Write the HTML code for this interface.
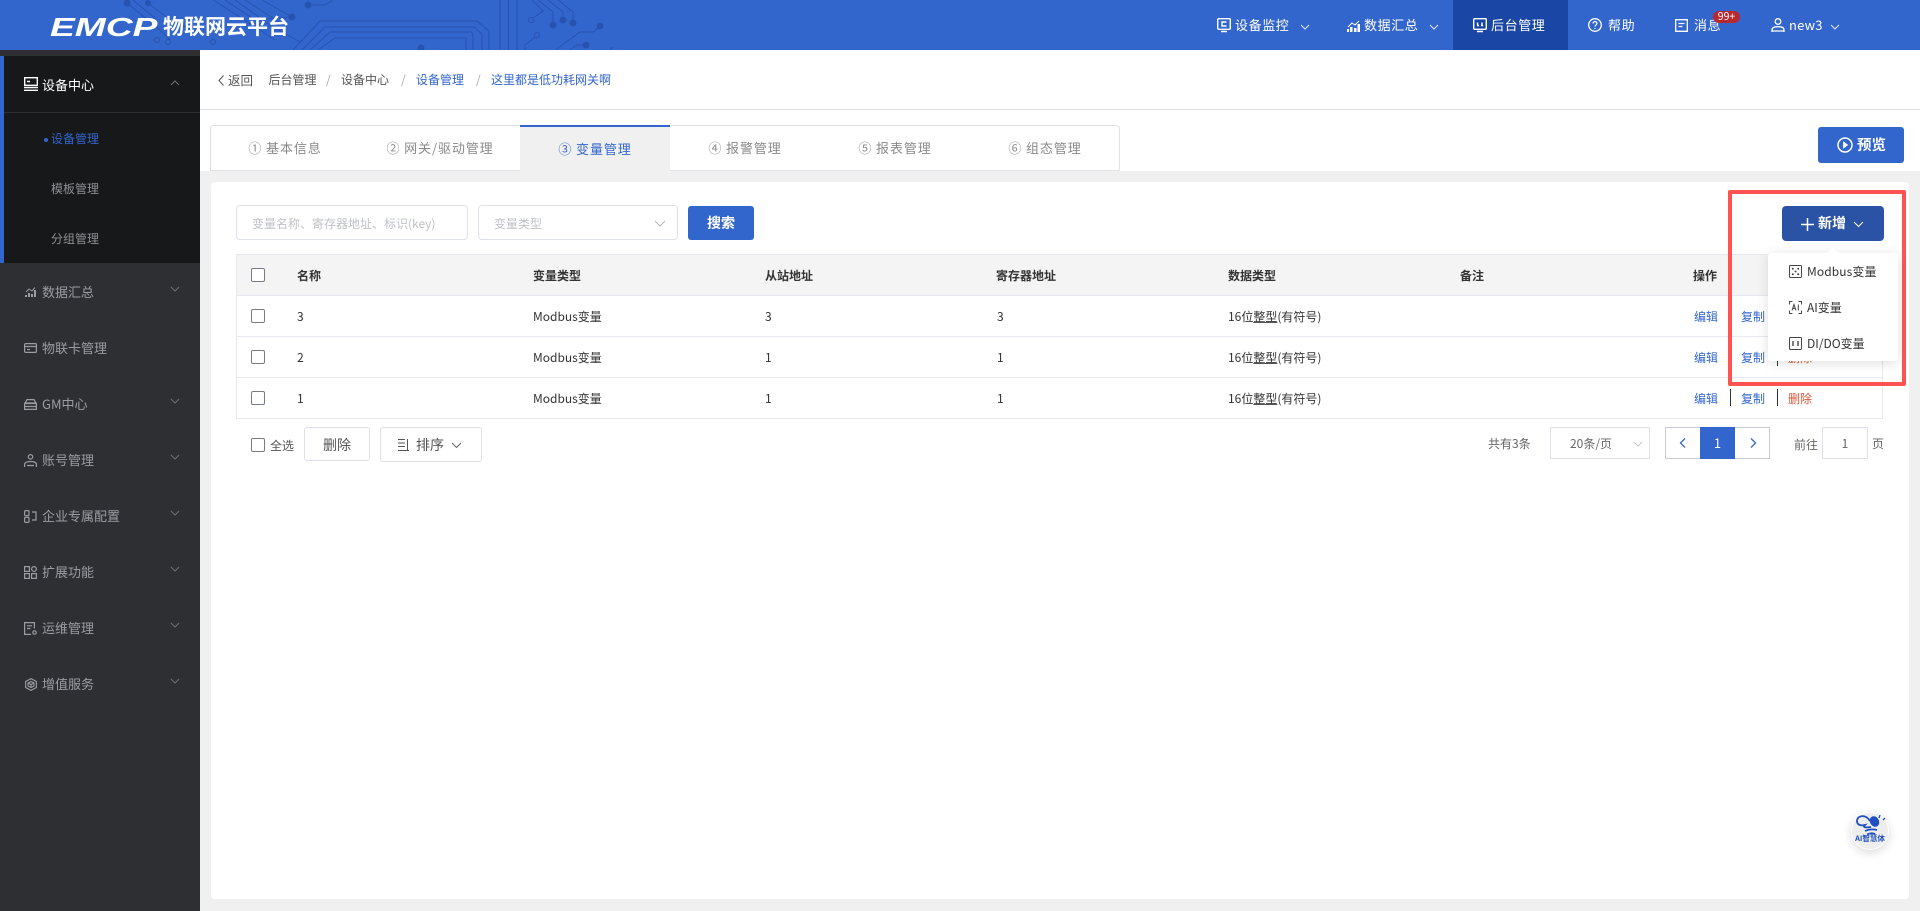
<!DOCTYPE html>
<html lang="zh-CN">
<head>
<meta charset="utf-8">
<title>EMCP 物联网云平台</title>
<style>
*{box-sizing:border-box;margin:0;padding:0}
html,body{width:1920px;height:911px;overflow:hidden;background:#f0f0f0}
body{position:relative;font-family:"Noto Sans CJK SC","Liberation Sans",sans-serif;font-size:12px;color:#333}
.a{position:absolute}
.t{position:absolute;white-space:nowrap;line-height:20px;height:20px}
svg{position:absolute;overflow:visible;fill:none}
.hd{color:#fff;font-size:13px;letter-spacing:.6px}
.sd{color:#9a9da3;font-size:13px}
.th{font-weight:700;color:#333}
.lnk{color:#3366cc}
.cb{position:absolute;width:14px;height:14px;border:1px solid #777b85;border-radius:2px;background:#fff}
.sep{position:absolute;width:1px;height:17px;background:#333}
.ln{position:absolute;left:237px;width:1646px;height:1px;background:#e8e9f0}
.tab{position:absolute;top:138px;width:150px;text-align:center;white-space:nowrap;line-height:20px;font-size:13px;letter-spacing:.9px;color:#8a8a8a}
u{text-decoration-thickness:1px;text-decoration-color:#555}
</style>
</head>
<body>

<!-- header -->
<div class="a" style="left:0;top:0;width:1920px;height:50px;background:#3366cc"></div>
<svg style="left:0;top:0" width="800" height="50" viewBox="0 0 800 50" stroke="#2753b0" stroke-width="1">
<path d="M293 50L320 21H477L489 31V50M302 50L325 27H474L482 34V50M310 50L330 32H472L473 38V50M318 50L335 38H466V50"/>
<path d="M500 0V50M508.5 0V50M517 0V50"/>
<path d="M532 0L543 11L533 18M538 0L553 12V25M548 0L563 12V20M558 0L573 12V23M525 50V45L535 37M555 50L580 32H593L600 26M570 50L577 45H586M610 50L613 47"/>
<path d="M127 3L158 28L170 40M148 3L170 20L192 30M133 0L156 19M213 0L240 17L275 40M225 0L255 20L292 17M235 0L270 25L300 42M245 0L282 24M262 0L292 17M308 5H325L333 0"/>
<g fill="#2753b0"><circle cx="553" cy="25" r="3"/><circle cx="563" cy="20" r="3"/><circle cx="573" cy="23" r="3"/><circle cx="600" cy="26" r="3"/><circle cx="586" cy="45" r="3"/><circle cx="421" cy="48" r="3"/><circle cx="127" cy="3" r="3"/><circle cx="148" cy="3" r="2.5"/><circle cx="308" cy="5" r="3"/><circle cx="292" cy="17" r="3"/></g>
<circle cx="531" cy="20" r="2.5"/><circle cx="537" cy="35" r="2.5"/><circle cx="157" cy="40" r="2.5"/><circle cx="168" cy="42" r="2.5"/><circle cx="213" cy="42" r="2.5"/>
</svg>
<div class="a" style="left:50px;top:13px;width:108px;height:28px;color:#fff;font:italic 700 26px/28px 'Liberation Sans',sans-serif;transform-origin:0 50%;transform:scaleX(1.43);white-space:nowrap">EMCP</div>
<div class="t" style="left:163px;top:14px;height:24px;line-height:24px;color:#fff;font-size:21px;font-weight:700">物联网云平台</div>

<div class="a" style="left:1453px;top:0;width:115px;height:50px;background:#1a47a5"></div>

<svg style="left:1217px;top:18px" width="14" height="15" viewBox="0 0 14 15" stroke="#fff" stroke-width="1.4"><rect x=".7" y=".7" width="12.6" height="10.6" rx="1"/><path d="M4 13.5H10M9.5 4H5V8H9.5" /></svg>
<div class="t hd" style="left:1235px;top:15px">设备监控</div>
<svg style="left:1300px;top:24px" width="10" height="6" stroke="#dfe6f7"><path d="M1 1L5 5L9 1"/></svg>
<svg style="left:1347px;top:20px" width="14" height="12" viewBox="0 0 14 12" fill="#fff"><path d="M0 12V9H2V12ZM3 12V7H5.500V12ZM7 12V8H9.500V12ZM10.500 12V4H13V12Z" fill="#fff"/><path d="M1 7L5 3L8 5L12 1" stroke="#fff"/></svg>
<div class="t hd" style="left:1364px;top:15px">数据汇总</div>
<svg style="left:1429px;top:24px" width="10" height="6" stroke="#dfe6f7"><path d="M1 1L5 5L9 1"/></svg>
<svg style="left:1473px;top:18px" width="14" height="15" viewBox="0 0 14 15" stroke="#fff" stroke-width="1.4"><rect x=".7" y=".7" width="12.6" height="10.6" rx="1"/><path d="M4 13.5H10M4 7.500H6M8 7.500H10M4.500 4.500V7M9 4.500V7"/></svg>
<div class="t hd" style="left:1491px;top:15px">后台管理</div>
<svg style="left:1588px;top:18px" width="14" height="14" viewBox="0 0 14 14" stroke="#fff" stroke-width="1.3"><circle cx="7" cy="7" r="6.300"/><path d="M5 5.500C5 3 9 3 9 5.500C9 7 7 7 7 8.500M7 10V11"/></svg>
<div class="t hd" style="left:1608px;top:15px">帮助</div>
<svg style="left:1675px;top:19px" width="13" height="13" viewBox="0 0 13 13" stroke="#fff" stroke-width="1.3"><path d="M.7.7H12.300V12.300H.7ZM3.500 4.500H9.500M3.500 7.500H7.500"/></svg>
<div class="t hd" style="left:1694px;top:15px">消息</div>
<div class="a" style="left:1713px;top:11px;width:27px;height:12px;border-radius:6px;background:#b8282e;color:#fff;font-size:10.500px;line-height:12px;text-align:center">99+</div>
<svg style="left:1771px;top:18px" width="14" height="15" viewBox="0 0 14 15" stroke="#fff" stroke-width="1.3"><circle cx="7" cy="3.500" r="2.800"/><path d="M1 14V12C1 9.500 3 8.700 7 8.700C11 8.700 13 9.500 13 12V14M1 13H13"/></svg>
<div class="t hd" style="left:1789px;top:15px;letter-spacing:.2px">new3</div>
<svg style="left:1830px;top:24px" width="10" height="6" stroke="#dfe6f7"><path d="M1 1L5 5L9 1"/></svg>

<!-- sidebar -->
<div class="a" style="left:0;top:50px;width:200px;height:861px;background:#2d2f33"></div>
<div class="a" style="left:0;top:56px;width:200px;height:207px;background:#17181a"></div>
<div class="a" style="left:0;top:56px;width:4px;height:207px;background:#3366cc"></div>
<div class="a" style="left:4px;top:112px;width:196px;height:1px;background:#2d2f33"></div>
<svg style="left:24px;top:77px" width="14" height="14" viewBox="0 0 14 14" stroke="#fff" stroke-width="1.4"><rect x=".7" y=".7" width="12.600" height="7.600"/><path d="M0 10.500H14M0 13.300H14M3 4.500H6"/></svg>
<div class="t" style="left:42px;top:75px;color:#fff;font-size:13px">设备中心</div>
<svg style="left:170px;top:80px" width="10" height="6" stroke="#6e7075"><path d="M1 5L5 1L9 5"/></svg>
<div class="a" style="left:44px;top:138px;width:4px;height:4px;border-radius:50%;background:#3366cc"></div>
<div class="t" style="left:51px;top:129px;color:#3366cc">设备管理</div>
<div class="t" style="left:51px;top:179px;color:#8f9196">模板管理</div>
<div class="t" style="left:51px;top:229px;color:#8f9196">分组管理</div>

<div class="t sd" style="left:42px;top:282px">数据汇总</div>
<div class="t sd" style="left:42px;top:338px">物联卡管理</div>
<div class="t sd" style="left:42px;top:394px">GM中心</div>
<div class="t sd" style="left:42px;top:450px">账号管理</div>
<div class="t sd" style="left:42px;top:506px">企业专属配置</div>
<div class="t sd" style="left:42px;top:562px">扩展功能</div>
<div class="t sd" style="left:42px;top:618px">运维管理</div>
<div class="t sd" style="left:42px;top:674px">增值服务</div>
<svg style="left:170px;top:286px" width="10" height="6" stroke="#6e7075"><path d="M1 1L5 5L9 1"/></svg>
<svg style="left:170px;top:398px" width="10" height="6" stroke="#6e7075"><path d="M1 1L5 5L9 1"/></svg>
<svg style="left:170px;top:454px" width="10" height="6" stroke="#6e7075"><path d="M1 1L5 5L9 1"/></svg>
<svg style="left:170px;top:510px" width="10" height="6" stroke="#6e7075"><path d="M1 1L5 5L9 1"/></svg>
<svg style="left:170px;top:566px" width="10" height="6" stroke="#6e7075"><path d="M1 1L5 5L9 1"/></svg>
<svg style="left:170px;top:622px" width="10" height="6" stroke="#6e7075"><path d="M1 1L5 5L9 1"/></svg>
<svg style="left:170px;top:678px" width="10" height="6" stroke="#6e7075"><path d="M1 1L5 5L9 1"/></svg>
<svg style="left:25px;top:287px" width="12" height="10" viewBox="0 0 12 10"><path d="M0 10V8H2V10ZM3 10V6H5V10ZM6 10V7H8V10ZM9 10V3H11V10Z" fill="#9a9da3"/><path d="M1 5L4 2L7 4L10 .5" stroke="#9a9da3"/></svg>
<svg style="left:24px;top:343px" width="13" height="10" viewBox="0 0 13 10" stroke="#9a9da3" stroke-width="1.200"><rect x=".6" y=".6" width="11.800" height="8.800" rx="1"/><path d="M1 3.500H12M3 6.500H6"/></svg>
<svg style="left:24px;top:399px" width="13" height="11" viewBox="0 0 13 11" stroke="#9a9da3" stroke-width="1.200"><path d="M3 .6H10L12 4H1ZM.6 4.500H12.400V10.400H.6ZM1 7.500H12"/></svg>
<svg style="left:24px;top:454px" width="13" height="13" viewBox="0 0 13 13" stroke="#9a9da3" stroke-width="1.200"><circle cx="6.500" cy="2.800" r="2.200"/><path d="M.6 13V10.500C.6 8.500 3 7.500 6.500 7.500C10 7.500 12.400 8.500 12.400 10.500V13M3 11.500H10"/></svg>
<svg style="left:24px;top:510px" width="13" height="13" viewBox="0 0 13 13" stroke="#9a9da3" stroke-width="1.200"><rect x=".6" y=".6" width="4.400" height="5" rx="1"/><rect x=".6" y="7.400" width="4.400" height="5" rx="1"/><path d="M8 2H12V10H8"/></svg>
<svg style="left:24px;top:566px" width="13" height="13" viewBox="0 0 13 13" stroke="#9a9da3" stroke-width="1.200"><rect x=".6" y=".6" width="4.800" height="4.800"/><circle cx="10" cy="3" r="2.400"/><rect x=".6" y="7.600" width="4.800" height="4.800"/><rect x="7.600" y="7.600" width="4.800" height="4.800"/></svg>
<svg style="left:24px;top:622px" width="13" height="13" viewBox="0 0 13 13" stroke="#9a9da3" stroke-width="1.200"><path d="M7 12.400H.6V.6H10.400V6.500M3 3.800H8M3 6.500H6.500"/><circle cx="10.500" cy="10.500" r="1.700"/></svg>
<svg style="left:25px;top:678px" width="12" height="13" viewBox="0 0 12 13" stroke="#9a9da3" stroke-width="1.100"><path d="M6 .6L11.400 3.500V9.500L6 12.400L.6 9.500V3.500ZM3 5L6 3.500L9 5V8L6 9.500L3 8ZM3 5L6 6.500L9 5M6 6.500V9.500"/></svg>

<!-- breadcrumb -->
<div class="a" style="left:200px;top:50px;width:1720px;height:121px;background:#fff"></div>
<div class="a" style="left:200px;top:109px;width:1720px;height:1px;background:#e2e2e2"></div>
<svg style="left:218px;top:75px" width="6" height="11" stroke="#555"><path d="M5.500 .5L1 5.500L5.500 10.500"/></svg>
<div class="t" style="left:228px;top:70px;color:#555;font-size:12.500px">返回</div>
<div class="t" style="left:268.500px;top:70px;color:#555">后台管理</div>
<div class="t" style="left:326px;top:70px;color:#aaa">/</div>
<div class="t" style="left:341px;top:70px;color:#555">设备中心</div>
<div class="t" style="left:401px;top:70px;color:#aaa">/</div>
<div class="t lnk" style="left:416px;top:70px">设备管理</div>
<div class="t" style="left:476px;top:70px;color:#aaa">/</div>
<div class="t lnk" style="left:491px;top:70px">这里都是低功耗网关啊</div>

<!-- tabs -->
<div class="a" style="left:210px;top:125px;width:310px;height:46px;border:1px solid #e1e1e8;border-right:0;border-radius:4px 0 0 0;background:#fff"></div>
<div class="a" style="left:520px;top:125px;width:150px;height:46px;border-top:2px solid #3366cc;background:#f0f0f0"></div>
<div class="a" style="left:670px;top:125px;width:450px;height:46px;border:1px solid #e1e1e8;border-left:0;border-radius:0 4px 0 0;background:#fff"></div>
<div class="tab" style="left:210px">① 基本信息</div>
<div class="tab" style="left:365px">② 网关/驱动管理</div>
<div class="tab" style="left:520px;top:139px;color:#3366cc">③ 变量管理</div>
<div class="tab" style="left:670px">④ 报警管理</div>
<div class="tab" style="left:820px">⑤ 报表管理</div>
<div class="tab" style="left:970px">⑥ 组态管理</div>

<div class="a" style="left:1818px;top:127px;width:86px;height:36px;background:#3366cc;border-radius:3px"></div>
<svg style="left:1837px;top:137px" width="16" height="16" viewBox="0 0 16 16" stroke="#fff" stroke-width="1.500"><circle cx="8" cy="8" r="7"/><path d="M6.500 5L10.500 8L6.500 11Z" fill="#fff" stroke-width=".8"/></svg>
<div class="t" style="left:1857px;top:135px;color:#fff;font-size:14.500px;font-weight:700">预览</div>

<!-- card -->
<div class="a" style="left:211px;top:182px;width:1698px;height:717px;background:#fff;border-radius:4px"></div>

<div class="a" style="left:236px;top:205px;width:232px;height:35px;border:1px solid #dfe1e8;border-radius:4px"></div>
<div class="t" style="left:252px;top:214px;color:#c0c2c8">变量名称、寄存器地址、标识(key)</div>
<div class="a" style="left:478px;top:205px;width:200px;height:35px;border:1px solid #dfe1e8;border-radius:4px"></div>
<div class="t" style="left:494px;top:214px;color:#c0c2c8">变量类型</div>
<svg style="left:654px;top:220px" width="12" height="7" stroke="#b5b7bd"><path d="M1 1L6 6L11 1"/></svg>
<div class="a" style="left:688px;top:206px;width:66px;height:34px;background:#3366cc;border-radius:3px;color:#fff;text-align:center;line-height:34px;font-size:14px;font-weight:700">搜索</div>

<!-- table -->
<div class="a" style="left:236px;top:254px;width:1647px;height:165px;border:1px solid #e8e9f0"></div>
<div class="a" style="left:237px;top:255px;width:1645px;height:40px;background:#f4f4f4"></div>
<div class="ln" style="top:295px"></div>
<div class="ln" style="top:336px"></div>
<div class="ln" style="top:377px"></div>
<div class="ln" style="top:418px"></div>

<div class="cb" style="left:251px;top:268px"></div>
<div class="t th" style="left:297px;top:266px">名称</div>
<div class="t th" style="left:533px;top:266px">变量类型</div>
<div class="t th" style="left:765px;top:266px">从站地址</div>
<div class="t th" style="left:996px;top:266px">寄存器地址</div>
<div class="t th" style="left:1228px;top:266px">数据类型</div>
<div class="t th" style="left:1460px;top:266px">备注</div>
<div class="t th" style="left:1693px;top:266px">操作</div>

<div class="cb" style="left:251px;top:309px"></div>
<div class="t" style="left:297px;top:307px">3</div>
<div class="t" style="left:533px;top:307px">Modbus变量</div>
<div class="t" style="left:765px;top:307px">3</div>
<div class="t" style="left:997px;top:307px">3</div>
<div class="t" style="left:1228px;top:307px">16位<u>整型</u>(有符号)</div>
<div class="t lnk" style="left:1694px;top:307px">编辑</div>
<div class="sep" style="left:1730px;top:308px"></div>
<div class="t lnk" style="left:1741px;top:307px">复制</div>
<div class="sep" style="left:1777px;top:308px"></div>
<div class="t" style="left:1788px;top:307px;color:#d9593a">删除</div>

<div class="cb" style="left:251px;top:350px"></div>
<div class="t" style="left:297px;top:348px">2</div>
<div class="t" style="left:533px;top:348px">Modbus变量</div>
<div class="t" style="left:765px;top:348px">1</div>
<div class="t" style="left:997px;top:348px">1</div>
<div class="t" style="left:1228px;top:348px">16位<u>整型</u>(有符号)</div>
<div class="t lnk" style="left:1694px;top:348px">编辑</div>
<div class="sep" style="left:1730px;top:349px"></div>
<div class="t lnk" style="left:1741px;top:348px">复制</div>
<div class="sep" style="left:1777px;top:349px"></div>
<div class="t" style="left:1788px;top:348px;color:#d9593a">删除</div>

<div class="cb" style="left:251px;top:391px"></div>
<div class="t" style="left:297px;top:389px">1</div>
<div class="t" style="left:533px;top:389px">Modbus变量</div>
<div class="t" style="left:765px;top:389px">1</div>
<div class="t" style="left:997px;top:389px">1</div>
<div class="t" style="left:1228px;top:389px">16位<u>整型</u>(有符号)</div>
<div class="t lnk" style="left:1694px;top:389px">编辑</div>
<div class="sep" style="left:1730px;top:389px"></div>
<div class="t lnk" style="left:1741px;top:389px">复制</div>
<div class="sep" style="left:1777px;top:389px"></div>
<div class="t" style="left:1788px;top:389px;color:#d9593a">删除</div>

<!-- table footer -->
<div class="cb" style="left:251px;top:438px"></div>
<div class="t" style="left:270px;top:436px;color:#555">全选</div>
<div class="a" style="left:304px;top:427px;width:66px;height:34px;border:1px solid #dfe1e8;border-radius:3px;text-align:center;line-height:34px;font-size:14px;color:#555">删除</div>
<div class="a" style="left:380px;top:427px;width:102px;height:35px;border:1px solid #dfe1e8;border-radius:3px"></div>
<svg style="left:398px;top:438px" width="12" height="14" viewBox="0 0 12 14" stroke="#555"><path d="M0 1.500H7M0 5H7M0 8.500H7M0 12.500H11M9.500 1V12"/></svg>
<div class="t" style="left:416px;top:435px;color:#555;font-size:14px">排序</div>
<svg style="left:451px;top:442px" width="11" height="7" stroke="#666"><path d="M1 1L5.500 5.500L10 1"/></svg>

<div class="t" style="left:1488px;top:434px;color:#666">共有3条</div>
<div class="a" style="left:1550px;top:427px;width:100px;height:32px;border:1px solid #dfe1e8"></div>
<div class="t" style="left:1570px;top:434px;color:#666">20条/页</div>
<svg style="left:1633px;top:441px" width="10" height="6" stroke="#c4c6cc"><path d="M1 1L5 5L9 1"/></svg>
<div class="a" style="left:1665px;top:427px;width:105px;height:32px;border:1px solid #c9cbd0"></div>
<div class="a" style="left:1700px;top:427px;width:35px;height:32px;background:#3366cc;color:#fff;text-align:center;line-height:32px;font-size:13px">1</div>
<svg style="left:1679px;top:438px" width="7" height="10" stroke="#3366cc" stroke-width="1.300"><path d="M6 .5L1.500 5L6 9.500"/></svg>
<svg style="left:1750px;top:438px" width="7" height="10" stroke="#3366cc" stroke-width="1.300"><path d="M1 .5L5.500 5L1 9.500"/></svg>
<div class="t" style="left:1794px;top:435px;color:#666">前往</div>
<div class="a" style="left:1822px;top:427px;width:46px;height:32px;border:1px solid #dfe1e8;text-align:center;line-height:31px;font-size:12px;color:#666">1</div>
<div class="t" style="left:1872px;top:434px;color:#666">页</div>

<!-- add button and dropdown -->
<div class="a" style="left:1782px;top:206px;width:102px;height:35px;background:#2a52a5;border-radius:4px"></div>
<svg style="left:1801px;top:218px" width="13" height="13" stroke="#fff" stroke-width="1.500"><path d="M6.500 0V13M0 6.500H13"/></svg>
<div class="t" style="left:1818px;top:213px;color:#fff;font-size:14px;font-weight:700">新增</div>
<svg style="left:1853px;top:221px" width="11" height="7" stroke="#fff"><path d="M1 1L5.500 5.500L10 1"/></svg>

<div class="a" style="left:1768px;top:253px;width:130px;height:108px;background:#fff;border-radius:3px;box-shadow:0 2px 12px rgba(0,0,0,.13)"></div>
<div class="a" style="left:1829px;top:249px;width:8px;height:8px;background:#fff;transform:rotate(45deg)"></div>
<svg style="left:1789px;top:265px" width="13" height="13" viewBox="0 0 13 13" stroke="#444"><rect x=".5" y=".5" width="12" height="12" rx="1"/><g fill="#444" stroke="none"><circle cx="3.800" cy="3.800" r="1"/><circle cx="9.200" cy="3.800" r="1"/><circle cx="6.500" cy="6.500" r="1"/><circle cx="3.800" cy="9.200" r="1"/><circle cx="9.200" cy="9.200" r="1"/></g></svg>
<div class="t" style="left:1807px;top:262px;letter-spacing:.1px">Modbus变量</div>
<svg style="left:1789px;top:301px" width="13" height="13" viewBox="0 0 13 13" stroke="#444"><path d="M.5 3.500V.5H3.500M9.500.5H12.500V3.500M12.500 9.500V12.500H9.500M3.500 12.500H.5V9.500M3 9.500L5 3.500L7 9.500M3.700 7.500H6.300M9.300 3.500V9.500"/></svg>
<div class="t" style="left:1807px;top:298px">AI变量</div>
<svg style="left:1789px;top:337px" width="13" height="13" viewBox="0 0 13 13" stroke="#444"><rect x=".5" y=".5" width="12" height="12" rx="1"/><path d="M4 4V9M9 4V9" stroke-width="1.400"/></svg>
<div class="t" style="left:1807px;top:334px">DI/DO变量</div>

<!-- red highlight -->
<div class="a" style="left:1728px;top:190px;width:178px;height:196px;border:4px solid #ff5252;border-radius:2px"></div>

<!-- AI helper -->
<div class="a" style="left:1851px;top:812px;width:38px;height:38px;border-radius:50%;background:#eeeeee;border:1px solid #fff;box-shadow:0 3px 10px rgba(0,0,0,.14)"></div>
<svg style="left:1851px;top:813px" width="38" height="38" viewBox="0 0 38 38" stroke="#1f4fc0" stroke-width="1.800">
<path d="M19 8C15 1 6 2 6 8C6 12 10 13 14 12C12 14 13 15 20 14"/>
<ellipse cx="23.500" cy="8.500" rx="4.500" ry="5.500" fill="#1f4fc0" stroke="none" transform="rotate(-30 23.500 8.500)"/>
<path d="M14 18C18 16 23 16 26 17M16 21.500C19 20 22 20 24 21"/>
<path d="M28 5L29 2M32 7L34 5" stroke-width="1.300"/>
</svg>
<div class="t" style="left:1854px;top:833px;width:32px;height:12px;line-height:12px;text-align:center;font-size:7.500px;font-weight:700;color:#1f4fc0">AI智慧体</div>

</body>
</html>
